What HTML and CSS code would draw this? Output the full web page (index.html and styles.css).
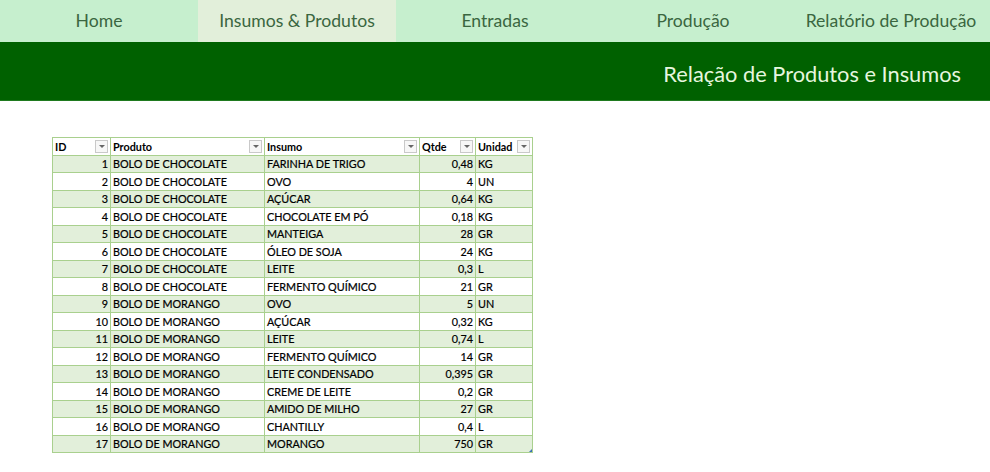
FILE: index.html
```
<!DOCTYPE html>
<html>
  <head>
    <meta charset="UTF-8">
    <title>Relação de Produtos e Insumos</title>
    <link rel="stylesheet" href="styles.css">
  </head>
  <body>
    <div class="menu">
      <div class="tab">Home</div>
      <div class="tab tab-active">Insumos &amp; Produtos</div>
      <div class="tab">Entradas</div>
      <div class="tab">Produção</div>
      <div class="tab">Relatório de Produção</div>
    </div>
    <div class="banner"><span class="banner-title">Relação de Produtos e Insumos</span></div>

    <div class="sheet">
      <table class="grid">
        <colgroup>
          <col class="c-id"><col class="c-prod"><col class="c-ins"><col class="c-qt"><col class="c-un">
        </colgroup>
        <thead>
          <tr>
            <th><span class="hd">ID</span><span class="drop"></span></th>
            <th><span class="hd">Produto</span><span class="drop"></span></th>
            <th><span class="hd">Insumo</span><span class="drop"></span></th>
            <th><span class="hd">Qtde</span><span class="drop"></span></th>
            <th><span class="hd">Unidad</span><span class="drop"></span></th>
          </tr>
        </thead>
        <tbody>
          <tr><td class="num">1</td><td>BOLO DE CHOCOLATE</td><td>FARINHA DE TRIGO</td><td class="num">0,48</td><td>KG</td></tr>
          <tr><td class="num">2</td><td>BOLO DE CHOCOLATE</td><td>OVO</td><td class="num">4</td><td>UN</td></tr>
          <tr><td class="num">3</td><td>BOLO DE CHOCOLATE</td><td>AÇÚCAR</td><td class="num">0,64</td><td>KG</td></tr>
          <tr><td class="num">4</td><td>BOLO DE CHOCOLATE</td><td>CHOCOLATE EM PÓ</td><td class="num">0,18</td><td>KG</td></tr>
          <tr><td class="num">5</td><td>BOLO DE CHOCOLATE</td><td>MANTEIGA</td><td class="num">28</td><td>GR</td></tr>
          <tr><td class="num">6</td><td>BOLO DE CHOCOLATE</td><td>ÓLEO DE SOJA</td><td class="num">24</td><td>KG</td></tr>
          <tr><td class="num">7</td><td>BOLO DE CHOCOLATE</td><td>LEITE</td><td class="num">0,3</td><td>L</td></tr>
          <tr><td class="num">8</td><td>BOLO DE CHOCOLATE</td><td>FERMENTO QUÍMICO</td><td class="num">21</td><td>GR</td></tr>
          <tr><td class="num">9</td><td>BOLO DE MORANGO</td><td>OVO</td><td class="num">5</td><td>UN</td></tr>
          <tr><td class="num">10</td><td>BOLO DE MORANGO</td><td>AÇÚCAR</td><td class="num">0,32</td><td>KG</td></tr>
          <tr><td class="num">11</td><td>BOLO DE MORANGO</td><td>LEITE</td><td class="num">0,74</td><td>L</td></tr>
          <tr><td class="num">12</td><td>BOLO DE MORANGO</td><td>FERMENTO QUÍMICO</td><td class="num">14</td><td>GR</td></tr>
          <tr><td class="num">13</td><td>BOLO DE MORANGO</td><td>LEITE CONDENSADO</td><td class="num">0,395</td><td>GR</td></tr>
          <tr><td class="num">14</td><td>BOLO DE MORANGO</td><td>CREME DE LEITE</td><td class="num">0,2</td><td>GR</td></tr>
          <tr><td class="num">15</td><td>BOLO DE MORANGO</td><td>AMIDO DE MILHO</td><td class="num">27</td><td>GR</td></tr>
          <tr><td class="num">16</td><td>BOLO DE MORANGO</td><td>CHANTILLY</td><td class="num">0,4</td><td>L</td></tr>
          <tr><td class="num">17</td><td>BOLO DE MORANGO</td><td>MORANGO</td><td class="num">750</td><td class="last">GR<span class="grip"></span></td></tr>
        </tbody>
      </table>
    </div>
  </body>
</html>
```

FILE: styles.css
```
body {
  margin:0;
  font-family:Lato, "Liberation Sans", sans-serif;
  background-color:#ffffff;
}
.menu {
  display:flex;
  height:42px;
  background-color:#c6efce;
}
.tab {
  width:198px;
  display:flex;
  align-items:center;
  justify-content:center;
  white-space:nowrap;
  font-size:17.6px;
  color:#3a6640;
  padding-bottom:1px;
}
.tab-active {
  background-color:#e2efda;
}
.banner {
  height:58px;
  background-color:#006100;
  border-bottom:1px solid #1f7a1f;
  display:flex;
  align-items:center;
  justify-content:flex-end;
  padding-right:29px;
}
.banner-title {
  font-size:21.8px;
  color:#e6f6df;
  padding-top:4px;
}
.sheet {
  padding:36px 0 0 52px;
}
.grid {
  border-collapse:collapse;
  table-layout:fixed;
  width:480px;
  font-size:10.8px;
  color:#000000;
}
.c-id { width:58px; }
.c-prod { width:154px; }
.c-ins { width:155px; }
.c-qt { width:56px; }
.c-un { width:57px; }
.grid th, .grid td {
  border:1px solid #a9d08e;
  height:16.5px;
  padding:0 2px;
  white-space:nowrap;
  overflow:hidden;
  text-align:left;
}
.grid td {
  -webkit-text-stroke:0.2px #000000;
}
.grid th {
  font-weight:bold;
  position:relative;
  background-color:#ffffff;
}
.grid tbody tr:nth-child(odd) td {
  background-color:#e2efda;
}
.grid td.num {
  text-align:right;
}
.drop {
  position:absolute;
  right:2px;
  top:2px;
  width:11px;
  height:11px;
  border:1px solid #c9c9c9;
  background-color:#f7f7f7;
}
.drop::after {
  content:"";
  position:absolute;
  left:3px;
  top:4px;
  border-left:3px solid transparent;
  border-right:3px solid transparent;
  border-top:3px solid #666666;
}
.last {
  position:relative;
}
.grip {
  position:absolute;
  right:0;
  bottom:0;
  border-left:3px solid transparent;
  border-bottom:3px solid #3a6fb5;
}
```
